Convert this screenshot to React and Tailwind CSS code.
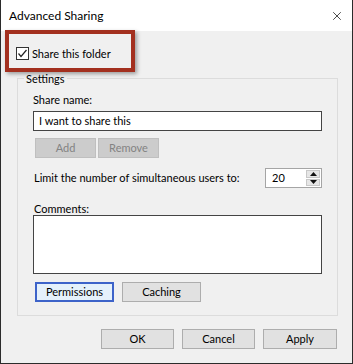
import { X } from "lucide-react";

const font = { fontFamily: 'Lato, "Noto Sans", sans-serif' };

function Btn({ children, className = "", disabled }) {
    return (
        <div
            className={`h-[20px] flex items-center justify-center border text-[11px] ${
                disabled
                    ? "bg-[#cccccc] border-[#bfbfbf] text-[#838383]"
                    : "bg-[#e1e1e1] border-[#adadad] text-black"
            } ${className}`}>
            {children}
        </div>
    );
}

function App() {
    return (
        <div
            style={font}
            className="relative w-[353px] h-[364px] bg-[#f0f0f0] border-x border-b border-[#2b2b2b] flex flex-col text-[11px] text-black overflow-hidden">
            {/* title bar */}
            <div className="h-[31px] bg-white flex items-center justify-between pl-[8px] pr-[8px] shrink-0">
                <span className="text-[12px]">Advanced Sharing</span>
                <X size={14} strokeWidth={1.2} className="text-black" />
            </div>

            {/* share checkbox */}
            <div className="flex items-center ml-[15px] mt-[16px] h-[13px]">
                <div className="w-[13px] h-[13px] border border-[#333] bg-white flex items-center justify-center">
                    <svg width="11" height="11" viewBox="0 0 11 11">
                        <path d="M1.5 5.5 L4 8.5 L9.5 2" fill="none" stroke="#222" strokeWidth="1.2" />
                    </svg>
                </div>
                <span className="ml-[3px] leading-[13px]">Share this folder</span>
            </div>

            {/* settings group */}
            <div className="ml-[16px] mt-[18px] w-[321px] border border-[#dcdcdc] pb-[13px]">
                <div className="-mt-[8px] ml-[6px] px-[2px] w-fit bg-[#f0f0f0] leading-[16px]">
                    Settings
                </div>
                <div className="ml-[15px] mt-[5px] leading-[16px]">Share name:</div>
                <div className="ml-[15px] mt-[3px] w-[289px] h-[20px] border border-[#444] bg-white flex items-center px-[5px]">
                    I want to share this
                </div>
                <div className="flex gap-[2px] ml-[17px] mt-[7px]">
                    <Btn disabled className="w-[61px]">Add</Btn>
                    <Btn disabled className="w-[61px]">Remove</Btn>
                </div>
                <div className="flex items-center justify-between ml-[16px] mt-[10px] w-[288px] h-[20px]">
                    <span className="whitespace-nowrap">Limit the number of simultaneous users to:</span>
                    <div className="w-[57px] h-[20px] border border-[#a5a5a5] bg-white flex">
                        <span className="flex-1 pl-[6px] flex items-center">20</span>
                        <div className="w-[16px] flex flex-col gap-[1px] p-[1px]">
                            <div className="flex-1 bg-[#e6e6e6] border border-[#c8c8c8] flex items-center justify-center">
                                <svg width="7" height="4" viewBox="0 0 7 4">
                                    <path d="M0 4 L3.5 0 L7 4 Z" fill="#111" />
                                </svg>
                            </div>
                            <div className="flex-1 bg-[#e6e6e6] border border-[#c8c8c8] flex items-center justify-center">
                                <svg width="7" height="4" viewBox="0 0 7 4">
                                    <path d="M0 0 L3.5 4 L7 0 Z" fill="#111" />
                                </svg>
                            </div>
                        </div>
                    </div>
                </div>
                <div className="ml-[16px] mt-[14px] leading-[13px] h-[13px]">Comments:</div>
                <div className="ml-[15px] w-[289px] h-[59px] border border-[#444] bg-white"></div>
                <div className="flex gap-[8px] ml-[17px] mt-[8px]">
                    <Btn className="w-[79px] !border-2 !border-[#3d63c9] !bg-[#e5f1fb]">Permissions</Btn>
                    <Btn className="w-[79px]">Caching</Btn>
                </div>
            </div>

            {/* dialog buttons */}
            <div className="flex justify-end gap-[8px] pr-[15px] mt-[13px]">
                <Btn className="w-[73px]">OK</Btn>
                <Btn className="w-[73px]">Cancel</Btn>
                <Btn className="w-[74px]">Apply</Btn>
            </div>

            {/* highlight annotation */}
            <div className="absolute left-[4px] top-[30px] w-[130px] h-[42px] border-4 border-[#a3301f] shadow-[2px_2px_4px_rgba(0,0,0,0.35)] pointer-events-none"></div>
        </div>
    );
}

export default App;
